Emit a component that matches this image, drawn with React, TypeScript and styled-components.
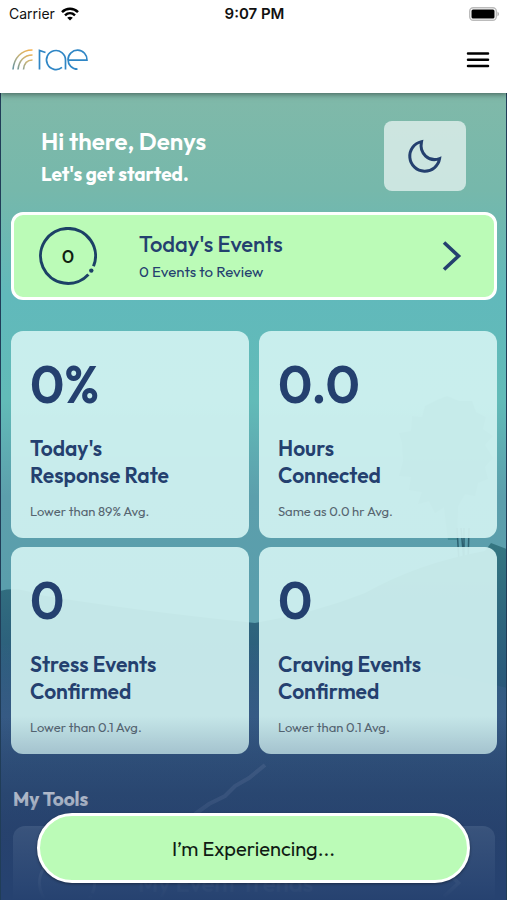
import React from "react";
import styled, { createGlobalStyle } from "styled-components";

const navy = "#24406f";
const mint = "#bbfbb7";
const rounded = '"Outfit", "Lato", sans-serif';

const GlobalStyle = createGlobalStyle`
  *, *::before, *::after { box-sizing: border-box; }
  body { margin: 0; background: #27406c; }
  h1, h2, p { margin: 0; }
  button { font: inherit; color: inherit; cursor: pointer; }
`;

const Screen = styled.div`
  display: flex;
  flex-direction: column;
  height: 100vh;
  overflow: hidden;
  position: relative;
  font-family: ${rounded};
  color: ${navy};
`;

const TopBar = styled.header`
  position: relative;
  z-index: 2;
  flex: none;
  background: #fff;
  box-shadow: 0 1px 6px rgba(0, 0, 0, 0.5);
`;

const StatusBar = styled.div`
  display: grid;
  grid-template-columns: 1fr auto 1fr;
  align-items: center;
  height: 27px;
  padding: 0 7px 0 9px;
  font-family: Inter, sans-serif;
  font-size: 14px;
  color: #111;
`;

const Carrier = styled.div`
  display: flex;
  align-items: center;
  gap: 6px;
`;

const Clock = styled.time`
  font-size: 15px;
  font-weight: 600;
`;

const Battery = styled.svg`
  justify-self: end;
`;

const NavBar = styled.nav`
  display: flex;
  align-items: center;
  justify-content: space-between;
  height: 66px;
  padding: 0 17px 0 11px;
`;

const HomeLink = styled.a`
  display: flex;
`;

const IconButton = styled.button`
  display: flex;
  padding: 0;
  border: 0;
  background: none;
`;

const Content = styled.main`
  position: relative;
  flex: 1;
  min-height: 0;
  overflow: hidden;
  padding: 28px 9px 0 10px;
  border: solid rgba(30, 60, 80, 0.7);
  border-width: 0 1px;
`;

const Scenery = styled.svg`
  position: absolute;
  inset: 0;
  width: 100%;
  height: 100%;
`;

const Sections = styled.div`
  position: relative;
`;

const Greeting = styled.section`
  display: flex;
  align-items: center;
  justify-content: space-between;
  padding: 0 31px 0 30px;
  margin-bottom: 21px;
  color: #fff;
`;

const GreetingTitle = styled.h1`
  font-size: 24px;
  line-height: 36px;
  font-weight: 600;
`;

const GreetingText = styled.p`
  font-size: 19px;
  line-height: 30px;
  font-weight: 700;
`;

const ModeButton = styled.button`
  display: grid;
  place-items: center;
  width: 82px;
  height: 70px;
  border: 0;
  border-radius: 8px;
  background: rgba(240, 248, 247, 0.7);
`;

const EventsCard = styled.button`
  display: grid;
  grid-template-columns: 58px 1fr auto;
  column-gap: 42px;
  align-items: center;
  width: 100%;
  height: 88px;
  padding: 0 32px 0 25px;
  margin-bottom: 31px;
  text-align: left;
  border: 3px solid #fff;
  border-radius: 12px;
  background: ${mint};
`;

const Ring = styled.span`
  display: grid;
  place-items: center;
  color: #102010;
  font-size: 19px;
  font-weight: 500;
  > * { grid-area: 1 / 1; }
`;

const EventsTitle = styled.span`
  display: block;
  font-size: 22px;
  line-height: 32px;
  font-weight: 500;
`;

const EventsText = styled.span`
  display: block;
  font-size: 15px;
  line-height: 24px;
`;

const Stats = styled.section`
  display: grid;
  grid-template-columns: 1fr 1fr;
  gap: 9px 10px;
`;

const StatCard = styled.article`
  padding: 19px 19px 16px;
  border-radius: 12px;
  background: rgba(209, 242, 241, 0.92);
`;

const StatValue = styled.p`
  font-size: 52px;
  line-height: 68px;
  font-weight: 600;
`;

const StatLabel = styled.h2`
  max-width: 160px;
  margin: 17px 0 11px;
  font-size: 21px;
  line-height: 27px;
  font-weight: 600;
`;

const StatNote = styled.p`
  font-size: 13px;
  line-height: 22px;
  color: #566570;
`;

const ToolsTitle = styled.h2`
  margin: 30px 2px 12px;
  font-size: 19px;
  line-height: 30px;
  font-weight: 700;
  color: #fff;
`;

const ToolCard = styled.button`
  display: grid;
  grid-template-columns: 58px 1fr auto;
  column-gap: 42px;
  align-items: center;
  width: calc(100% - 4px);
  height: 114px;
  margin: 0 2px;
  padding: 0 33px 0 25px;
  border: 0;
  border-radius: 12px;
  background: rgba(190, 215, 235, 0.45);
  color: #dbe8f2;
  font-size: 24px;
  font-weight: 500;
  text-align: left;
`;

const BottomFade = styled.div`
  position: absolute;
  inset: auto 0 0;
  height: 184px;
  background: linear-gradient(rgba(38, 64, 108, 0), rgba(38, 64, 108, 0.2) 20%, rgba(38, 64, 108, 0.4) 46%, rgba(38, 64, 108, 0.74) 62%, rgba(38, 66, 112, 0.94) 92%, #264270);
  pointer-events: none;
`;

const ExperienceButton = styled.button`
  position: absolute;
  right: 37px;
  bottom: 17px;
  left: 37px;
  z-index: 3;
  height: 70px;
  border: 3px solid #fff;
  border-radius: 35px;
  background: ${mint};
  box-shadow: 0 1px 3px rgba(0, 0, 0, 0.4);
  color: #101b14;
  font-size: 20px;
  font-weight: 400;
`;

const stats = [
  { value: "0%", label: "Today's Response Rate", note: "Lower than 89% Avg." },
  { value: "0.0", label: "Hours Connected", note: "Same as 0.0 hr Avg." },
  { value: "0", label: "Stress Events Confirmed", note: "Lower than 0.1 Avg." },
  { value: "0", label: "Craving Events Confirmed", note: "Lower than 0.1 Avg." },
];

const Wifi = () => (
  <svg width="18" height="14" viewBox="0 0 18 14" fill="none" stroke="#000" strokeWidth="2.5" aria-hidden="true">
    <path d="M1 5.2C5.5 .7 12.500 .7 17 5.200M4 8.300c2.900-2.700 7.100-2.700 10 0" />
    <path d="M9 13.500 6.200 10.700c1.500-1.400 4.100-1.400 5.600 0z" fill="#000" stroke="none" />
  </svg>
);

const Logo = () => (
  <svg width="78" height="24" viewBox="11 48 78 24" fill="none" role="img" aria-label="rae">
    <defs>
      <linearGradient id="arcs" x1="32" y1="50" x2="15" y2="70" gradientUnits="userSpaceOnUse">
        <stop stopColor="#f6b04b" />
        <stop offset=".5" stopColor="#c5b47b" />
        <stop offset="1" stopColor="#6593a0" />
      </linearGradient>
    </defs>
    <g stroke="url(#arcs)" strokeWidth="1.600">
      <path d="M13 69.500C14 58 21 50 32.500 50M18 69.500C19 61 24 55 32.500 55M23.500 69.500C24 64 27 60 32.500 60" />
    </g>
    <g stroke="#2f86c5" strokeWidth="1.700">
      <path d="M39.500 69.500V50.500L45.500 52.500" />
      <path d="M65.500 69.500V60a9.500 9.500 0 1 0-3.500 7.400" />
      <path d="M68 60.200H87A9.500 9.500 0 1 0 77.500 69.200" />
    </g>
  </svg>
);

const Moon = () => (
  <svg width="36" height="36" viewBox="0 0 36 36" fill="none" stroke={navy} strokeWidth="3" strokeLinejoin="miter" aria-hidden="true">
    <path d="M14.500 3.600A15 15 0 1 0 32.600 20.600C22 24.500 12 15.500 14.500 3.600Z" />
  </svg>
);

const Chevron = () => (
  <svg width="20" height="32" viewBox="0 0 20 32" fill="none" stroke="currentColor" strokeWidth="3.600" aria-hidden="true">
    <path d="M2 2.500 16.500 16 2 29.500" />
  </svg>
);

const Progress = () => (
  <svg width="58" height="58" viewBox="0 0 58 58" fill="none" aria-hidden="true">
    <path d="M54.500 39.300A27.500 27.500 0 1 0 49.400 47.400" stroke="currentColor" strokeWidth="3" />
    <circle cx="52.300" cy="43.600" r="2.200" fill="currentColor" />
  </svg>
);

const RingProgress = styled.span`
  display: flex;
  color: #1c4166;
`;

const Landscape = () => (
  <Scenery viewBox="0 0 507 807" preserveAspectRatio="xMidYMid slice" aria-hidden="true">
    <defs>
      <linearGradient id="sky" x2="0" y2="1">
        <stop stopColor="#80b9a9" />
        <stop offset=".12" stopColor="#76b8ab" />
        <stop offset=".25" stopColor="#61b9bb" />
        <stop offset=".38" stopColor="#62bbb8" />
        <stop offset=".5" stopColor="#5c9fac" />
        <stop offset=".62" stopColor="#5a9eac" />
      </linearGradient>
      <linearGradient id="hills" x2="0" y2="1">
        <stop stopColor="#347681" />
        <stop offset=".35" stopColor="#2b5c7b" />
        <stop offset=".65" stopColor="#294a73" />
        <stop offset="1" stopColor="#274270" />
      </linearGradient>
      <linearGradient id="field" x2="0" y2="1">
        <stop stopColor="#3a638b" stopOpacity="0" />
        <stop offset=".3" stopColor="#365a84" />
        <stop offset=".6" stopColor="#2b4a73" />
        <stop offset="1" stopColor="#26426f" />
      </linearGradient>
    </defs>
    <rect width="507" height="807" fill="url(#sky)" />
    <path d="M402 350l-3-10 12-2 1-15 10 1 3-11 12-6 10-4 12 5 13 0 4 11 10 5-3 12 10 7-8 9 8 13-8 9 3 12-10 4-3 13-10-2-7 12-1 34h-9l-4-33-9 6-6-12-11 3 4-12-13-2 2-13-12-1 4-15Z" fill="#2f7c82" opacity=".5" />
    <path d="M457 435l2 34M461 435l3 34M464 435v34M469 435l-1 34" fill="none" stroke="#2c6070" strokeWidth="1.500" />
    <path d="M0 498q16-5 40 4 90 15 215 28 60-10 110-30 54-30 120-42l6-8 16 6V807H0Z" fill="url(#hills)" />
    <path d="M0 552q110-11 254 0 121 9 253 43V807H0Z" fill="url(#field)" />
    <path d="M195 721l14-10 16-8 10-10 14-8 16-13" fill="none" stroke="#526b91" strokeWidth="4" opacity=".6" />
  </Scenery>
);

export default function App() {
  return (
    <Screen>
      <GlobalStyle />
      <TopBar>
        <StatusBar>
          <Carrier>Carrier <Wifi /></Carrier>
          <Clock>9:07 PM</Clock>
          <Battery width="31" height="14" viewBox="0 0 31 14" role="img" aria-label="Battery full">
            <rect x=".7" y=".7" width="26.600" height="12.600" rx="3.500" fill="#fff" stroke="#bbb" strokeWidth="1.400" />
            <rect x="2.500" y="2.500" width="23" height="9" rx="1.500" />
            <path d="M28.500 4.500q3 2.500 0 5z" fill="#aaa" />
          </Battery>
        </StatusBar>
        <NavBar>
          <HomeLink href="#"><Logo /></HomeLink>
          <IconButton aria-label="Menu">
            <svg width="24" height="18" viewBox="0 0 24 18" stroke="#000" strokeWidth="2.500" strokeLinecap="round">
              <path d="M2 2.500h20M2 8.700h20M2 14.900h20" />
            </svg>
          </IconButton>
        </NavBar>
      </TopBar>
      <Content>
        <Landscape />
        <Sections>
          <Greeting>
            <div>
              <GreetingTitle>Hi there, Denys</GreetingTitle>
              <GreetingText>Let's get started.</GreetingText>
            </div>
            <ModeButton aria-label="Night mode"><Moon /></ModeButton>
          </Greeting>
          <EventsCard>
            <Ring><RingProgress><Progress /></RingProgress><span>0</span></Ring>
            <span>
              <EventsTitle>Today's Events</EventsTitle>
              <EventsText>0 Events to Review</EventsText>
            </span>
            <Chevron />
          </EventsCard>
          <Stats>
            {stats.map((stat) => (
              <StatCard key={stat.label}>
                <StatValue>{stat.value}</StatValue>
                <StatLabel>{stat.label}</StatLabel>
                <StatNote>{stat.note}</StatNote>
              </StatCard>
            ))}
          </Stats>
          <ToolsTitle>My Tools</ToolsTitle>
          <ToolCard>
            <Progress />
            <span>My Event Trends</span>
            <Chevron />
          </ToolCard>
        </Sections>
        <BottomFade />
      </Content>
      <ExperienceButton>I’m Experiencing...</ExperienceButton>
    </Screen>
  );
}
